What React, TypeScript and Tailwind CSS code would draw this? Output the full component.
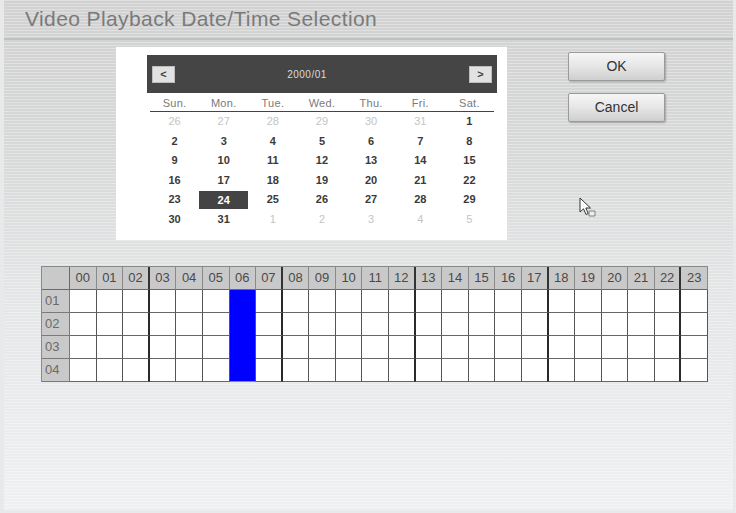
import React from "react";

type Day = { n: number; muted?: boolean; selected?: boolean };

const weeks: Day[][] = [
  [{ n: 26, muted: true }, { n: 27, muted: true }, { n: 28, muted: true }, { n: 29, muted: true }, { n: 30, muted: true }, { n: 31, muted: true }, { n: 1 }],
  [{ n: 2 }, { n: 3 }, { n: 4 }, { n: 5 }, { n: 6 }, { n: 7 }, { n: 8 }],
  [{ n: 9 }, { n: 10 }, { n: 11 }, { n: 12 }, { n: 13 }, { n: 14 }, { n: 15 }],
  [{ n: 16 }, { n: 17 }, { n: 18 }, { n: 19 }, { n: 20 }, { n: 21 }, { n: 22 }],
  [{ n: 23 }, { n: 24, selected: true }, { n: 25 }, { n: 26 }, { n: 27 }, { n: 28 }, { n: 29 }],
  [{ n: 30 }, { n: 31 }, { n: 1, muted: true }, { n: 2, muted: true }, { n: 3, muted: true }, { n: 4, muted: true }, { n: 5, muted: true }],
];

const weekdays = ["Sun.", "Mon.", "Tue.", "Wed.", "Thu.", "Fri.", "Sat."];
const hours = Array.from({ length: 24 }, (_, i) => String(i).padStart(2, "0"));
const channels = ["01", "02", "03", "04"];
const thick = new Set([2, 7, 12, 17, 22]);
const activeHour = 6;

function Calendar() {
  return (
    <div className="ml-[112px] w-[391px] h-[193px] bg-white pl-[31px] pr-[10px] pt-[8px]">
      <div className="h-[38px] bg-[#454545] flex items-center justify-between px-[5px]">
        <div className="w-[23px] h-[17px] bg-[#e2e2e2] border border-[#bdbdbd] flex items-center justify-center text-[11px] font-bold text-[#444] leading-none">
          &lt;
        </div>
        <div className="text-[10px] text-[#dcdcdc] tracking-[0.5px] mr-[30px]">2000/01</div>
        <div className="w-[23px] h-[17px] bg-[#e2e2e2] border border-[#bdbdbd] flex items-center justify-center text-[11px] font-bold text-[#444] leading-none">
          &gt;
        </div>
      </div>
      <div className="ml-[3px] w-[344px]">
        <div className="grid grid-cols-7 h-[19px] border-b border-[#444] items-center">
          {weekdays.map((w) => (
            <div key={w} className="text-center text-[11px] tracking-[0.3px] text-[#7a7a7a] leading-none pt-[3px]">
              {w}
            </div>
          ))}
        </div>
        {weeks.map((week, wi) => (
          <div key={wi} className="grid grid-cols-7 h-[19.5px] items-center">
            {week.map((d, di) =>
              d.selected ? (
                <div key={di} className="h-[18px] bg-[#444] text-white text-[11px] font-bold flex items-center justify-center">
                  {d.n}
                </div>
              ) : (
                <div
                  key={di}
                  className={
                    d.muted
                      ? "text-center text-[11px] text-[#c4c4c4] leading-none"
                      : "text-center text-[11px] font-bold text-[#3a3a3a] leading-none"
                  }
                >
                  {d.n}
                </div>
              )
            )}
          </div>
        ))}
      </div>
    </div>
  );
}

function DialogButton({ label }: { label: string }) {
  return (
    <div className="w-[97px] h-[29px] rounded-[2px] border border-[#9a9a9a] bg-linear-to-b from-[#f6f6f6] via-[#e6e6e6] to-[#cfcfcf] shadow-[1px_1px_2px_rgba(0,0,0,0.25)] flex items-center justify-center text-[14px] font-medium text-[#333]">
      {label}
    </div>
  );
}

function HourGrid() {
  return (
    <div className="ml-[37px] mt-[26px] w-[667px] border-l border-t border-[#8a8a8a] grid grid-cols-[28px_repeat(24,1fr)]">
      <div className="h-[23px] bg-[#c9c9c9] border-r border-b border-[#6a6a6a]" />
      {hours.map((h, i) => (
        <div
          key={h}
          className={
            thick.has(i)
              ? "h-[23px] bg-[#c9c9c9] border-b border-[#6a6a6a] border-r-2 border-r-[#333] flex items-center justify-center text-[13px] text-[#4a4a4a]"
              : "h-[23px] bg-[#c9c9c9] border-b border-[#6a6a6a] border-r border-r-[#8a8a8a] flex items-center justify-center text-[13px] text-[#4a4a4a]"
          }
        >
          {h}
        </div>
      ))}
      {channels.map((c, ri) => (
        <React.Fragment key={c}>
          <div className="h-[23px] bg-[#c9c9c9] border-r border-b border-[#7a7a7a] flex items-center pl-[3px] text-[13px] text-[#6a6a6a]">
            {c}
          </div>
          {hours.map((h, i) => {
            if (i === activeHour) {
              return (
                <div
                  key={h}
                  className={
                    ri === channels.length - 1
                      ? "h-[23px] bg-[#0000ff] border-r border-b border-r-[#555] border-b-[#8a8a8a]"
                      : "h-[23px] bg-[#0000ff] border-r border-b border-r-[#555] border-b-[#0000ff]"
                  }
                />
              );
            }
            return (
              <div
                key={h}
                className={
                  thick.has(i)
                    ? "h-[23px] bg-white border-b border-b-[#666] border-r-2 border-r-[#2a2a2a]"
                    : "h-[23px] bg-white border-b border-b-[#666] border-r border-r-[#555]"
                }
              />
            );
          })}
        </React.Fragment>
      ))}
    </div>
  );
}

function Pointer() {
  return (
    <svg className="absolute left-[574px] top-[197px]" width="20" height="22" viewBox="0 0 20 22">
      <path d="M2 1 L2 15 L5.5 11.8 L8 17.5 L10.2 16.5 L7.8 11 L12.5 11 Z" fill="#fff" stroke="#333" strokeWidth="1" strokeLinejoin="round" />
      <path d="M11 14 L17 14 L17 19 L11 19 Z" fill="#eee" stroke="#666" strokeWidth="0.8" />
    </svg>
  );
}

export default function App() {
  return (
    <div className="w-[736px] h-[513px] bg-[#e8e9ea] pl-[4px] pr-[3px] pb-[3px] font-['Liberation_Sans',Arial,sans-serif]">
      <div className="relative h-full flex flex-col bg-[image:repeating-linear-gradient(180deg,rgba(255,255,255,0.32)_0px,rgba(255,255,255,0.32)_1px,transparent_1px,transparent_3px),linear-gradient(180deg,#d1d1d1_0%,#d7d8d8_30%,#e5e6e7_60%,#eef0f2_100%)]">
        <div className="h-[40px] shrink-0 pl-[21px] pt-[7px] border-b-2 border-[#c0c0c0] text-[21px] tracking-[0.4px] leading-[24px] text-[#7a7a7a]">
          Video Playback Date/Time Selection
        </div>
        <div className="flex mt-[7px]">
          <Calendar />
          <div className="ml-[61px] mt-[5px] flex flex-col gap-[12px]">
            <DialogButton label="OK" />
            <DialogButton label="Cancel" />
          </div>
        </div>
        <HourGrid />
        <Pointer />
      </div>
    </div>
  );
}
